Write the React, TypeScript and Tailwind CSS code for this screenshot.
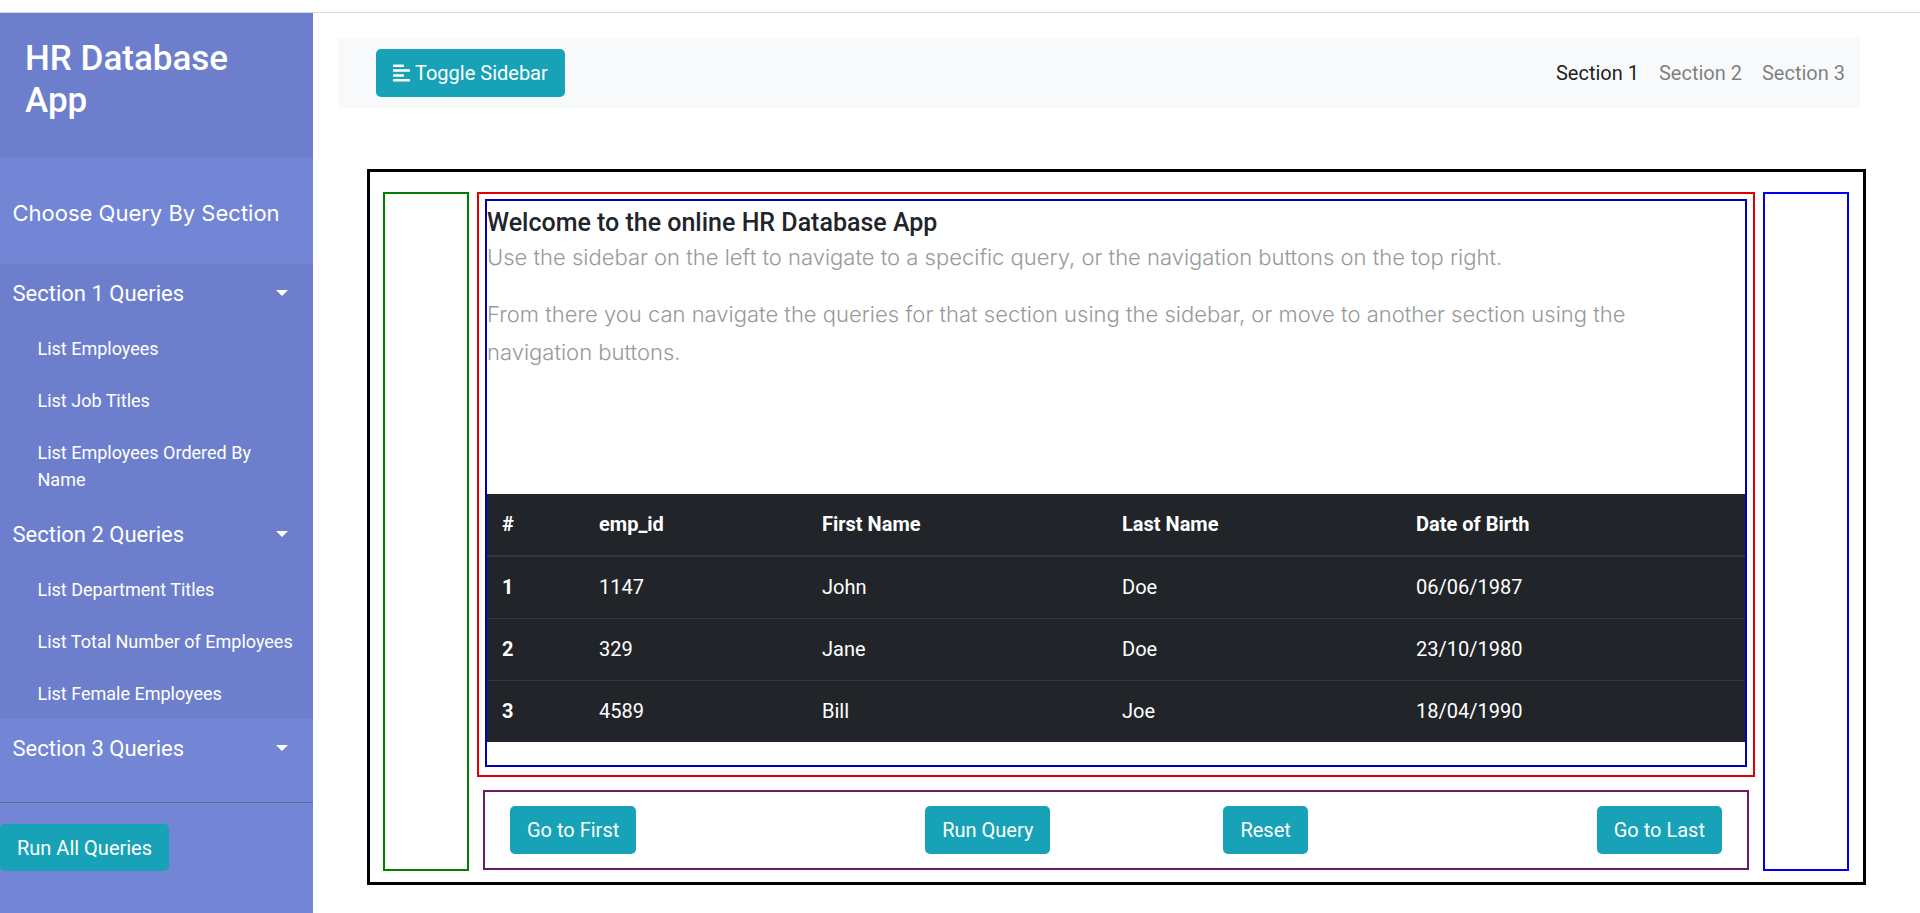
import React from 'react';

type Section = { title: string; open: boolean; items: string[] };

const sections: Section[] = [
  { title: 'Section 1 Queries', open: true, items: ['List Employees', 'List Job Titles', 'List Employees Ordered By Name'] },
  { title: 'Section 2 Queries', open: true, items: ['List Department Titles', 'List Total Number of Employees', 'List Female Employees'] },
  { title: 'Section 3 Queries', open: false, items: [] },
];

const employees = [
  { n: 1, id: '1147', first: 'John', last: 'Doe', dob: '06/06/1987' },
  { n: 2, id: '329', first: 'Jane', last: 'Doe', dob: '23/10/1980' },
  { n: 3, id: '4589', first: 'Bill', last: 'Joe', dob: '18/04/1990' },
];

function AlignLeftIcon() {
  return (
    <svg className="w-[17px] h-[20px]" viewBox="0 0 448 512" fill="currentColor">
      <path d="M12.83 352h262.34A12.82 12.82 0 0 0 288 339.17v-38.34A12.82 12.82 0 0 0 275.17 288H12.83A12.82 12.82 0 0 0 0 300.83v38.34A12.82 12.82 0 0 0 12.83 352zm0-256h262.34A12.82 12.82 0 0 0 288 83.17V44.83A12.82 12.82 0 0 0 275.17 32H12.83A12.82 12.82 0 0 0 0 44.83v38.34A12.82 12.82 0 0 0 12.83 96zM432 160H16a16 16 0 0 0-16 16v32a16 16 0 0 0 16 16h416a16 16 0 0 0 16-16v-32a16 16 0 0 0-16-16zm0 256H16a16 16 0 0 0-16 16v32a16 16 0 0 0 16 16h416a16 16 0 0 0 16-16v-32a16 16 0 0 0-16-16z" />
    </svg>
  );
}

function Sidebar() {
  return (
    <nav className="w-[313px] shrink-0 bg-[#7386d5] text-white min-h-[900px]">
      {/* Header */}
      <div className="bg-[#6d7fcc] px-[25px] pt-[25px] pb-[25px]">
        <h3 className="text-[35px] leading-[42px] font-medium mb-[10px]">
          HR Database
          <br />
          App
        </h3>
      </div>

      <ul className="py-[25px] border-b border-[#47748b]">
        <p className="font-[Inter,sans-serif] text-[22px] leading-[1.7] p-[12.5px] mb-[20px]">Choose Query By Section</p>
        {sections.map((s) => (
          <li key={s.title}>
            <a className={`relative block p-[12.5px] text-[22px] leading-[33px] ${s.open ? 'bg-[#6d7fcc]' : ''}`}>
              {s.title}
              <span className="absolute right-[25px] top-1/2 -translate-y-1/2 w-0 h-0 border-x-[6.5px] border-x-transparent border-t-[6.5px] border-t-white" />
            </a>
            {s.items.length > 0 && (
              <ul className="bg-[#6d7fcc]">
                {s.items.map((item) => (
                  <li key={item}>
                    <a className="block pl-[37.5px] pr-[12.5px] py-[12.5px] text-[18px] leading-[27px]">{item}</a>
                  </li>
                ))}
              </ul>
            )}
          </li>
        ))}
      </ul>

      <div className="pt-[21px]">
        <button className="h-[47px] px-[17px] bg-[#17a2b8] rounded-[5px] text-[20px] text-white">Run All Queries</button>
      </div>
    </nav>
  );
}

function ActionButton({ label }: { label: string }) {
  return (
    <button className="h-[48px] px-[17px] bg-[#17a2b8] rounded-[5px] text-[20px] text-white whitespace-nowrap">{label}</button>
  );
}

export default function App() {
  return (
    <div className="h-[913px] overflow-hidden bg-white font-[Roboto,sans-serif] text-[#212529]">
      <div className="h-[13px] border-b border-[#dadada]" />
      <div className="flex">
        <Sidebar />

        {/* Content */}
        <div className="flex-1 pl-[25px] pt-[25px]">
          <div className="w-[1522px] h-[70px] bg-[#f8f9fa] flex items-center pl-[38px] pr-[5px]">
            <button className="h-[48px] px-[17px] bg-[#17a2b8] rounded-[5px] text-[20px] text-white flex items-center gap-[5px]">
              <AlignLeftIcon />
              <span>Toggle Sidebar</span>
            </button>
            <div className="ml-auto flex text-[20px]">
              <a className="px-[10px] text-black/90">Section 1</a>
              <a className="px-[10px] text-black/50">Section 2</a>
              <a className="px-[10px] text-black/50">Section 3</a>
            </div>
          </div>

          {/* Main frame */}
          <div className="ml-[29px] mt-[61px] w-[1499px] h-[716px] border-[3px] border-black flex pl-[13px] pt-[20px]">
            <div className="w-[86px] h-[679px] border-2 border-[#008000] shrink-0" />

            <div className="w-[1278px] ml-[8px] shrink-0">
              <div className="h-[585px] border-2 border-[#e00000] pl-[6px] pr-[6px] pt-[5px]">
                <div className="h-[568px] border-2 border-[#0000b4] pt-[6px]">
                  <h5 className="text-[25px] leading-[32px] font-medium">Welcome to the online HR Database App</h5>
                  <p className="font-[Inter,sans-serif] font-light text-[22px] leading-[37.4px] text-[#999]">
                    Use the sidebar on the left to navigate to a specific query, or the navigation buttons on the top right.
                  </p>
                  <p className="font-[Inter,sans-serif] font-light text-[22px] leading-[37.4px] text-[#999] mt-[20px]">
                    From there you can navigate the queries for that section using the sidebar, or move to another section using the
                    <br />
                    navigation buttons.
                  </p>

                  <table className="mt-[123px] w-full bg-[#212529] text-white text-[20px] leading-[31px] border-collapse">
                    <thead>
                      <tr className="border-b-2 border-[#32383e]">
                        <th className="w-[97px] text-left font-bold px-[15px] py-[15px]">#</th>
                        <th className="w-[223px] text-left font-bold px-[15px] py-[15px]">emp_id</th>
                        <th className="w-[300px] text-left font-bold px-[15px] py-[15px]">First Name</th>
                        <th className="w-[294px] text-left font-bold px-[15px] py-[15px]">Last Name</th>
                        <th className="text-left font-bold px-[15px] py-[15px]">Date of Birth</th>
                      </tr>
                    </thead>
                    <tbody>
                      {employees.map((e) => (
                        <tr key={e.n} className="border-t border-[#32383e]">
                          <th className="text-left font-bold px-[15px] py-[15px]">{e.n}</th>
                          <td className="px-[15px] py-[15px]">{e.id}</td>
                          <td className="px-[15px] py-[15px]">{e.first}</td>
                          <td className="px-[15px] py-[15px]">{e.last}</td>
                          <td className="px-[15px] py-[15px]">{e.dob}</td>
                        </tr>
                      ))}
                    </tbody>
                  </table>
                </div>
              </div>

              <div className="ml-[6px] mt-[13px] w-[1266px] h-[80px] border-2 border-[#6a1b6a] flex items-center justify-between px-[25px]">
                <ActionButton label="Go to First" />
                <div className="flex gap-[173px]">
                  <ActionButton label="Run Query" />
                  <ActionButton label="Reset" />
                </div>
                <ActionButton label="Go to Last" />
              </div>
            </div>

            <div className="w-[86px] h-[679px] ml-[8px] border-2 border-[#0000ee] shrink-0" />
          </div>
        </div>
      </div>
    </div>
  );
}
